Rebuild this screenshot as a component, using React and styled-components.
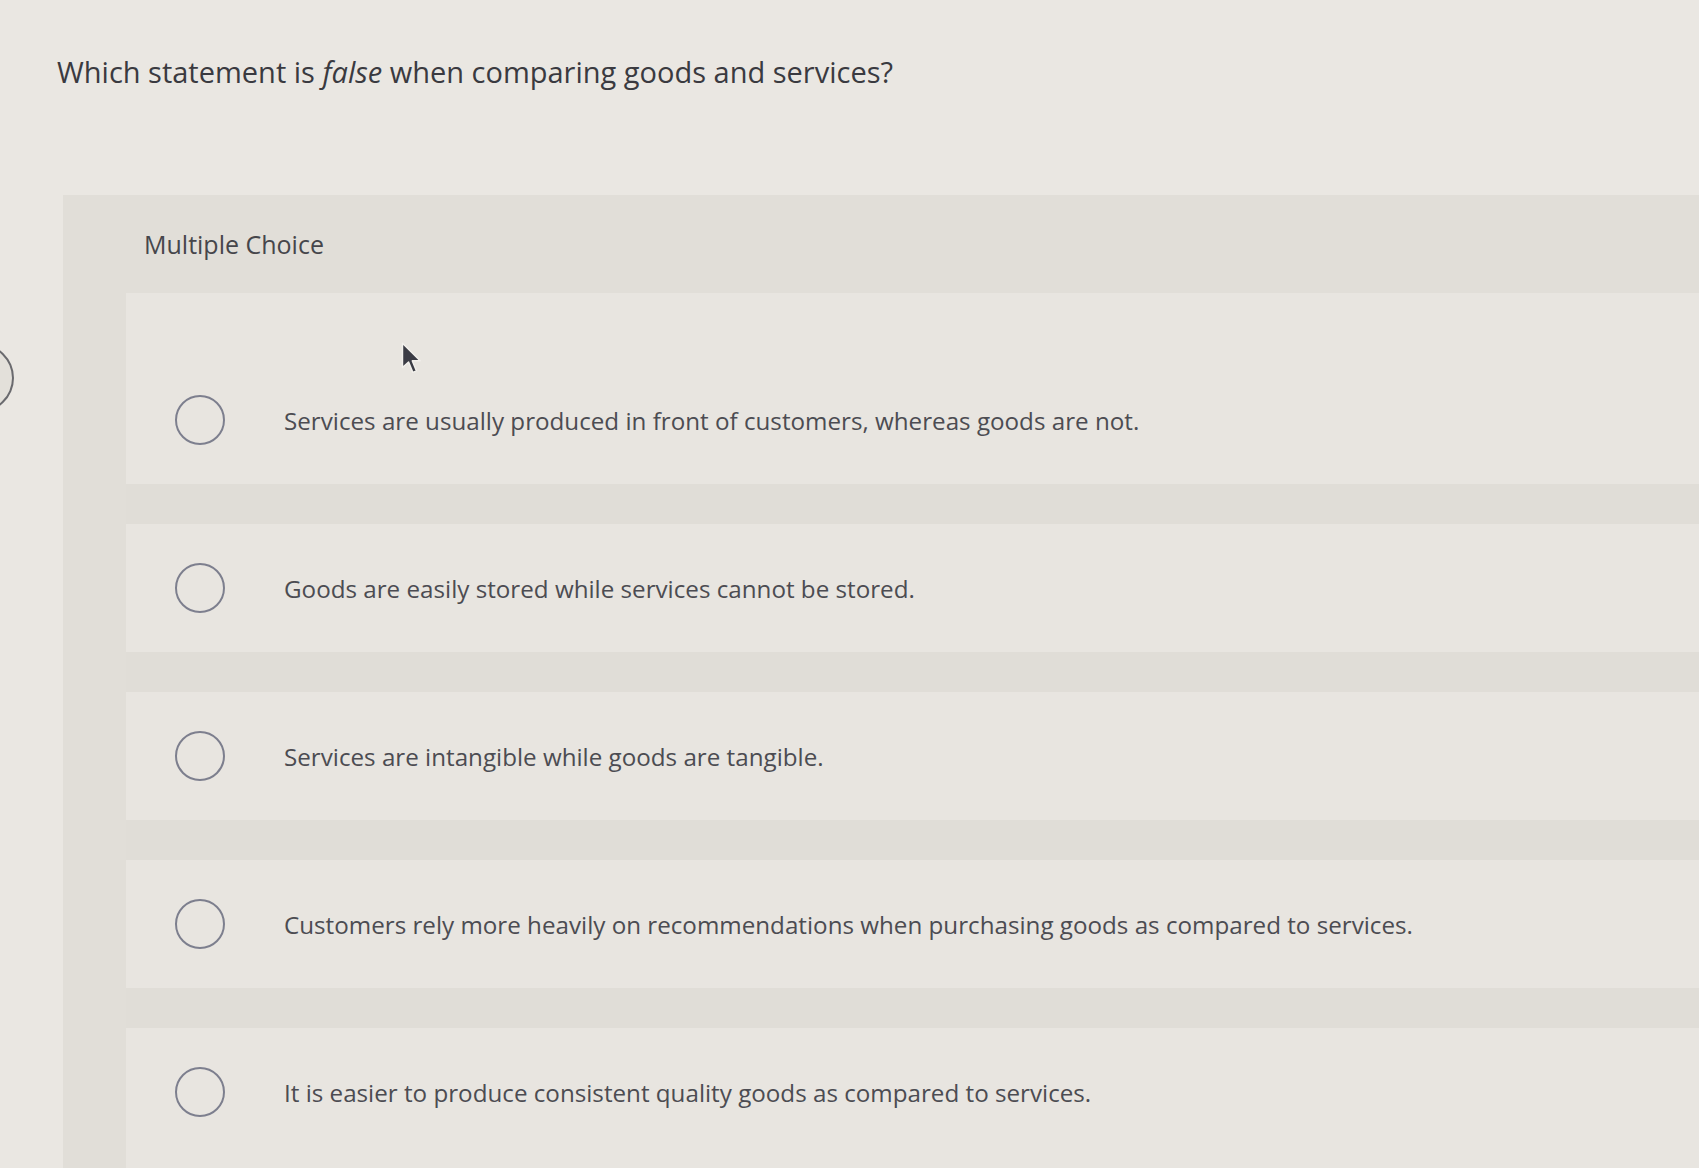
import React from 'react'
import styled, { createGlobalStyle } from 'styled-components'

const GlobalStyle = createGlobalStyle`
    html, body {
        margin: 0;
        padding: 0;
        background-color: #eae7e2;
        overflow: hidden;
    }
    * {
        box-sizing: border-box;
    }
`;

const Page = styled.div`
    position: relative;
    width: 1699px;
    height: 1168px;
    overflow: hidden;
    background-color: #eae7e2;
    font-family: "Open Sans", Lato, sans-serif;
    padding-top: 53px;
`;

const Question = styled.h1`
    margin: 0 0 104px 57px;
    font-size: 29px;
    line-height: 38px;
    font-weight: 400;
    color: #3a3a40;

    em {
        font-style: italic;
    }
`;

const Panel = styled.section`
    margin-left: 63px;
    background-color: #e1ded8;
    height: 973px;
`;

const PanelHeader = styled.div`
    height: 98px;
    display: flex;
    align-items: center;
    padding-left: 81px;
    font-size: 25px;
    color: #46464b;
`;

const OptionList = styled.div`
    margin-left: 63px;
    padding-top: 63px;
    background-color: #e8e5e0;
    height: 875px;
    display: flex;
    flex-direction: column;
`;

const Option = styled.label`
    height: 128px;
    display: flex;
    align-items: center;
    gap: 59px;
    padding-left: 49px;
    background-color: #e8e5e0;
    cursor: pointer;
`;

const Divider = styled.div`
    height: 40px;
    background-color: #e0ddd7;
`;

const Radio = styled.span`
    flex: none;
    width: 50px;
    height: 50px;
    border-radius: 50%;
    border: 2px solid #7d7f8e;
`;

const OptionText = styled.span`
    font-size: 24.2px;
    color: #4c4c52;
`;

// half hidden round button on the left edge of the screen
const EdgeButton = styled.div`
    position: absolute;
    left: -58px;
    top: 343px;
    width: 72px;
    height: 70px;
    border-radius: 50%;
    border: 2px solid #6a6a6e;
    background-color: #e3e0da;
`;

const Pointer = styled.svg`
    position: absolute;
    left: 400px;
    top: 342px;
`;

const options = [
    'Services are usually produced in front of customers, whereas goods are not.',
    'Goods are easily stored while services cannot be stored.',
    'Services are intangible while goods are tangible.',
    'Customers rely more heavily on recommendations when purchasing goods as compared to services.',
    'It is easier to produce consistent quality goods as compared to services.',
];

const App = () => {
    return (
        <>
            <GlobalStyle />
            <Page>
                <Question>
                    Which statement is <em>false</em> when comparing goods and services?
                </Question>

                <Panel>
                    <PanelHeader>Multiple Choice</PanelHeader>
                    <OptionList>
                        {options.map((text, i) => (
                            <React.Fragment key={i}>
                                {i > 0 && <Divider />}
                                <Option>
                                    <Radio />
                                    <OptionText>{text}</OptionText>
                                </Option>
                            </React.Fragment>
                        ))}
                    </OptionList>
                </Panel>

                <EdgeButton />
                <Pointer width="22" height="34" viewBox="0 0 18 28">
                    <path d="M2 1 L2 21 L7 16.5 L10.5 25 L13.5 23.8 L10 15.5 L16.5 15.5 Z"
                        fill="#3b3c45" stroke="#f2f0ec" strokeWidth="1.2" strokeLinejoin="round" />
                </Pointer>
            </Page>
        </>
    )
}

export default App
